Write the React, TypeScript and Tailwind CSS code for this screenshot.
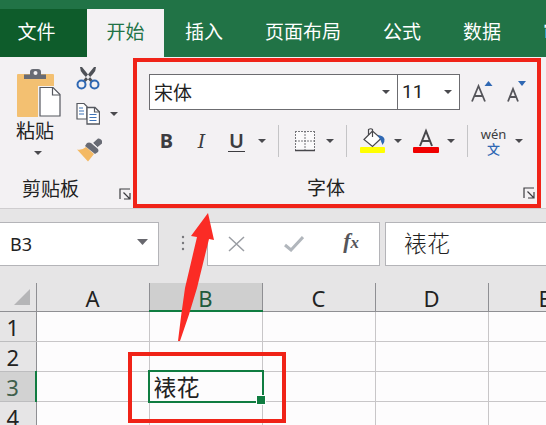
import type { ReactNode } from "react"
import clsx from "clsx"

const tabs = ["插入", "页面布局", "公式", "数据", "审阅"]
const columns = ["A", "B", "C", "D", "E"]
const rows = [1, 2, 3, 4]

const Caret = ({ className }: { className?: string }) => (
  <svg viewBox="0 0 8 4" className={clsx("h-1 w-2 fill-[#4a4a4e]", className)} aria-hidden="true">
    <path d="M0 0h8L4 4z" />
  </svg>
)

const CaretButton = ({ label }: { label: string }) => (
  <button aria-label={label} className="flex h-8 w-4 shrink-0 items-center justify-center">
    <Caret />
  </button>
)

const ToolButton = ({ label, children }: { label: string, children: ReactNode }) => (
  <button aria-label={label} className="flex h-8 w-[35px] shrink-0 items-center justify-center">
    {children}
  </button>
)

const Separator = () => <div className="mx-2 h-8 w-px shrink-0 bg-[#c4c4c6]" />

const Launcher = ({ label }: { label: string }) => (
  <button aria-label={label}>
    <svg viewBox="0 0 12 12" className="size-3 fill-none stroke-[#3c3c40]" aria-hidden="true">
      <path d="M1 11V1h10M4.500 4.500l6 6M11 5v6H5" strokeWidth="1.200" />
    </svg>
  </button>
)

const PasteIcon = () => (
  <svg viewBox="0 0 45 48" className="h-12 w-[45px]" aria-hidden="true">
    <rect x="1" y="5" width="37" height="43" rx="1" fill="#f3c071" />
    <path d="M8 10V5.500h6V3q0-3 3-3h5q3 0 3 3v2.500h5V10z" fill="#686b74" />
    <circle cx="19.500" cy="4" r="2" fill="#f3f1f3" />
    <path d="M22 17h16l7 7v24H22z" fill="#f3f1f3" />
    <path d="M24 18.500h13l7 7V47H24z" fill="#fff" stroke="#55585f" strokeWidth="1.200" />
    <path d="M36.500 18.500v7.500H44" fill="none" stroke="#55585f" strokeWidth="1.200" />
  </svg>
)

const CutIcon = () => (
  <svg viewBox="0 0 24 24" className="size-6" fill="none" aria-hidden="true">
    <path d="M4 1q0 4 3 7l7.500 8 2-2L6 1zM20 1q0 4-3 7l-7.500 8-2-2L18 1z" fill="#4e5157" />
    <circle cx="5.500" cy="18.500" r="4" stroke="#2f68b3" strokeWidth="2" />
    <circle cx="18.500" cy="18.500" r="4" stroke="#2f68b3" strokeWidth="2" />
  </svg>
)

const CopyIcon = () => (
  <svg viewBox="0 0 24 24" className="size-6" fill="#fff" stroke="#55585f" aria-hidden="true">
    <path d="M1 1.500h7l3 3V17H1z" strokeWidth="1.200" />
    <path d="M3 6h4M3 9h5M3 12h5" stroke="#3f74b8" strokeWidth="1.200" />
    <path d="M11 5.500h8l4.500 4.500v12H11z" strokeWidth="1.300" />
    <path d="M18.500 5.500V10h5" fill="none" strokeWidth="1.200" />
    <path d="M13.500 12.500h7M13.500 15.500h7M13.500 18.500h7" stroke="#3f74b8" strokeWidth="1.200" />
  </svg>
)

const BrushIcon = () => (
  <svg viewBox="0 0 26 24" className="h-6 w-[26px]" aria-hidden="true">
    <path d="M1 11.500q5 1 9-2.500l8 7-6 7.500z" fill="#f3b964" />
    <path d="M9 8l2-3q2-1 4 0l7 6q1 2 0 3l-3 2z" fill="#686b74" />
    <path d="M17 5L22 .5q2-.5 3.500 1.500t.5 3.500L21 9.500z" fill="#686b74" />
    <path d="M16 4.500l5.500 5" stroke="#f3f1f3" strokeWidth="1" />
  </svg>
)

const BordersIcon = () => (
  <svg viewBox="0 0 22 22" className="size-[22px]" fill="none" aria-hidden="true">
    <path d="M1 1h20v19H1z" fill="#fbfafb" />
    <path d="M1 1.500h20M1 11h20M1.500 1v19M11 1v19M20.500 1v19" stroke="#77777b" strokeDasharray="2 1" />
    <path d="M1 20.500h20" stroke="#48484c" strokeWidth="1.500" />
  </svg>
)

const FillIcon = () => (
  <svg viewBox="0 0 27 26" className="h-[26px] w-[27px]" fill="none" aria-hidden="true">
    <rect x="1" y="19" width="25" height="6" rx="1" fill="#ffff00" />
    <path d="M5 11.500L13.500 3l8.500 7.500-8.500 8z" fill="#fff" stroke="#48484c" strokeWidth="1.200" />
    <path d="M9.500 7V1.500Q12 0 13.500 1.500V9" stroke="#48484c" strokeWidth="1.200" />
    <path d="M18.500 7q6 .5 7 4 .5 3-2 6-1.500-5-5-10z" fill="#2f68b3" />
  </svg>
)

const FontColorIcon = () => (
  <svg viewBox="0 0 26 26" className="size-[26px]" fill="none" aria-hidden="true">
    <path d="M7 18l6-15 6 15M9 13h8" stroke="#48484c" strokeWidth="2" />
    <rect y="19" width="26" height="6" rx="1" fill="#f00000" />
  </svg>
)

const TabBar = () => (
  <nav className="flex h-[57px] shrink-0 items-end overflow-hidden bg-[#217346] text-[19px] whitespace-nowrap text-white">
    <button className="h-12 w-[87px] shrink-0 bg-[#0e5c2b] pr-3.5 pb-1">文件</button>
    <button className="h-12 w-[77px] shrink-0 bg-[#f3f1f3] pb-1 text-[#217346]">开始</button>
    {tabs.map((tab) => (
      <button key={tab} className="h-12 shrink-0 px-[21px] pb-1">{tab}</button>
    ))}
  </nav>
)

const ClipboardGroup = () => (
  <section className="flex w-[133px] shrink-0 flex-col justify-between pt-2 pl-4">
    <div className="flex gap-[15px]">
      <button className="flex w-[45px] flex-col items-start pt-[3px]">
        <PasteIcon />
        <span className="text-[19px] leading-[26px]">粘贴</span>
        <Caret className="mt-2 ml-[18px]" />
      </button>
      <div className="flex flex-col gap-3">
        <button aria-label="剪切" className="flex h-6"><CutIcon /></button>
        <button aria-label="复制" className="flex h-6 items-center gap-2.5"><CopyIcon /><Caret /></button>
        <button aria-label="格式刷" className="flex h-6"><BrushIcon /></button>
      </div>
    </div>
    <div className="flex items-end justify-between pr-0.5 pb-2 pl-1.5">
      <h2 className="text-[19px] leading-6">剪贴板</h2>
      <Launcher label="剪贴板设置" />
    </div>
  </section>
)

const FontGroup = () => (
  <section className="flex w-[408px] shrink-0 flex-col border-4 border-[#f02318] pt-3 pr-0.5 pl-3">
    <div className="flex items-center">
      <div className="relative">
        <select aria-label="字体名称" className="h-9 w-[249px] appearance-none border border-[#6c6c70] bg-white pl-1 text-[19px]">
          <option>宋体</option>
        </select>
        <Caret className="pointer-events-none absolute top-4 right-2" />
      </div>
      <div className="relative -ml-px">
        <select aria-label="字号" className="h-9 w-[63px] appearance-none border border-[#6c6c70] bg-white pl-1 font-[Roboto,sans-serif] text-[19px]">
          <option>11</option>
        </select>
        <Caret className="pointer-events-none absolute top-4 right-2" />
      </div>
      <button aria-label="增大字号" className="ml-2 flex h-9 w-7 items-center justify-center">
        <svg viewBox="0 0 22 24" className="h-6 w-[22px]" fill="none" aria-hidden="true">
          <path d="M1 21.500L7.500 6 14 21.500M3.500 16h8" stroke="#55555a" strokeWidth="1.800" />
          <path d="M13.500 6L17.500 1l4 5z" fill="#2f68b3" />
        </svg>
      </button>
      <button aria-label="减小字号" className="ml-2 flex h-9 w-7 items-center justify-center">
        <svg viewBox="0 0 22 24" className="h-6 w-[22px]" fill="none" aria-hidden="true">
          <path d="M1 21.500L6 9l5 12.500M3 17h6.500" stroke="#55555a" strokeWidth="1.800" />
          <path d="M11 1h8l-4 5z" fill="#2f68b3" />
        </svg>
      </button>
    </div>
    <div className="mt-[15px] flex items-center font-['Noto_Sans',sans-serif] text-[20px] text-[#3c3c40]">
      <ToolButton label="加粗"><span className="font-bold">B</span></ToolButton>
      <ToolButton label="倾斜"><span className="font-['DejaVu_Serif',serif] text-[19px] italic">I</span></ToolButton>
      <ToolButton label="下划线"><span className="border-b border-[#3c3c40] px-px leading-5 font-semibold">U</span></ToolButton>
      <CaretButton label="下划线样式" />
      <Separator />
      <ToolButton label="边框"><BordersIcon /></ToolButton>
      <CaretButton label="边框样式" />
      <Separator />
      <ToolButton label="填充颜色"><FillIcon /></ToolButton>
      <CaretButton label="选择填充颜色" />
      <div className="ml-0.5 flex items-center">
        <ToolButton label="字体颜色"><FontColorIcon /></ToolButton>
        <CaretButton label="选择字体颜色" />
        <Separator />
        <ToolButton label="拼音指南">
          <span className="flex flex-col items-center text-[13px]">
            <span className="leading-[15px]">wén</span>
            <span className="font-['Noto_Sans_CJK_SC',sans-serif] leading-[14px] font-medium text-[#2f68b3]">文</span>
          </span>
        </ToolButton>
        <CaretButton label="拼音选项" />
      </div>
    </div>
    <div className="mt-auto flex items-end pb-[5px]">
      <h2 className="flex-1 pr-5 text-center text-[19px] leading-6">字体</h2>
      <Launcher label="字体设置" />
    </div>
  </section>
)

const FormulaBar = () => (
  <div className="flex h-[74px] shrink-0 items-start bg-[#e6e5e6] pt-[13px]">
    <div className="relative shrink-0">
      <input aria-label="名称框" defaultValue="B3" className="h-11 w-[159px] border border-l-0 border-[#b4b4b8] bg-white pl-2.5 font-['Noto_Sans',sans-serif] text-[18px]" />
      <svg viewBox="0 0 11 7" className="pointer-events-none absolute top-[17px] right-[11px] h-[7px] w-[11px] fill-[#68686e]" aria-hidden="true">
        <path d="M0 0h11L5.500 6z" />
      </svg>
    </div>
    <svg viewBox="0 0 48 44" className="h-11 w-12 shrink-0 fill-[#77777b]" aria-hidden="true">
      <circle cx="24" cy="15" r="1.200" />
      <circle cx="24" cy="21" r="1.200" />
      <circle cx="24" cy="27" r="1.200" />
    </svg>
    <div className="flex h-11 w-[173px] shrink-0 items-center justify-between border border-[#b4b4b8] bg-white px-5">
      <button aria-label="取消">
        <svg viewBox="0 0 17 16" className="h-4 w-[17px]" fill="none" stroke="#9a9da3" strokeWidth="1.500" aria-hidden="true">
          <path d="M1 1l15 14M16 1L1 15" />
        </svg>
      </button>
      <button aria-label="输入">
        <svg viewBox="0 0 20 16" className="h-4 w-5" fill="none" stroke="#b1b6bc" strokeWidth="3" aria-hidden="true">
          <path d="M1 9l6 5L19 1" />
        </svg>
      </button>
      <button aria-label="插入函数" className="pb-1 font-['Liberation_Serif',serif] text-[22px] leading-6 font-bold text-[#55555a] italic">
        f<span className="text-[17px]">x</span>
      </button>
    </div>
    <input aria-label="编辑栏" defaultValue="裱花" className="ml-[5px] h-11 min-w-0 flex-1 border border-r-0 border-[#b4b4b8] bg-white pb-1 pl-[18px] text-[23px] font-light" />
  </div>
)

const Sheet = () => (
  <div className="flex-1 overflow-hidden">
    <table className="w-max table-fixed border-collapse font-['Noto_Sans',sans-serif] text-[22px] leading-6 text-[#222]">
      <thead>
        <tr className="h-7 bg-[#e6e5e6]">
          <th className="w-9 border-r border-b border-[#8f8f93] p-0">
            <svg viewBox="0 0 16 16" className="ml-3.5 size-4 fill-[#b5b5b7]" aria-hidden="true">
              <path d="M16 0v16H0z" />
            </svg>
          </th>
          {columns.map((col) => (
            <th
              key={col}
              scope="col"
              className={clsx(
                "border-r p-0 pt-0.5 font-normal",
                col === "B" ? "border-b-2 border-r-[#8f8f93] border-b-[#107c41] bg-[#cfcfcf] text-[#1f5a3c]" : "border-b border-[#8f8f93]"
              )}
            >
              <div className="w-28">{col}</div>
            </th>
          ))}
        </tr>
      </thead>
      <tbody>
        {rows.map((row) => (
          <tr key={row} className="h-[30px]">
            <th
              scope="row"
              className={clsx(
                "border-b border-b-[#bdbdbf] p-0 pt-0.5 pr-2.5 font-normal",
                row === 3 ? "border-r-2 border-r-[#107c41] bg-[#d2d2d2] text-[#3f5f4c]" : "border-r border-r-[#8f8f93] bg-[#e6e5e6]"
              )}
            >
              {row}
            </th>
            {columns.map((col) => (
              <td key={col} className="relative border-r border-b border-[#c8c6c8] bg-[#fdfcfd] p-0">
                {row === 3 && col === "B" && (
                  <>
                    <div className="absolute -inset-x-0.5 -inset-y-0.5 z-10 flex items-center border-2 border-[#107c41] bg-[#fdfcfd] pl-1 font-['Noto_Sans_CJK_SC',sans-serif] text-[23px]">
                      裱花
                    </div>
                    <div className="absolute -right-1 -bottom-1 z-10 size-2.5 border border-white bg-[#107c41]" />
                    <div className="absolute -top-5 -right-6 -bottom-[22px] -left-[22px] z-10 border-4 border-[#f02318]" />
                  </>
                )}
              </td>
            ))}
          </tr>
        ))}
      </tbody>
    </table>
  </div>
)

const App = () => (
  <div className="relative flex h-screen flex-col overflow-hidden bg-[#fdfcfd] font-['Noto_Sans_CJK_SC',sans-serif] text-[#222]">
    <TabBar />
    <div className="flex h-[152px] shrink-0 overflow-hidden border-b border-[#cfcdcf] bg-[#f3f1f3] pt-px">
      <ClipboardGroup />
      <FontGroup />
    </div>
    <FormulaBar />
    <Sheet />
    {/* arrow from the cell up to the font group */}
    <svg viewBox="0 0 37 129" className="pointer-events-none absolute top-[213px] left-[178px] z-20 h-[129px] w-[37px] fill-[#fb2b25]" aria-hidden="true">
      <path d="M30 0l6 27-5-1-12 49q-8 28-17 53H0q3-26 7-53L19 24l-6-1z" />
    </svg>
  </div>
)

export default App
